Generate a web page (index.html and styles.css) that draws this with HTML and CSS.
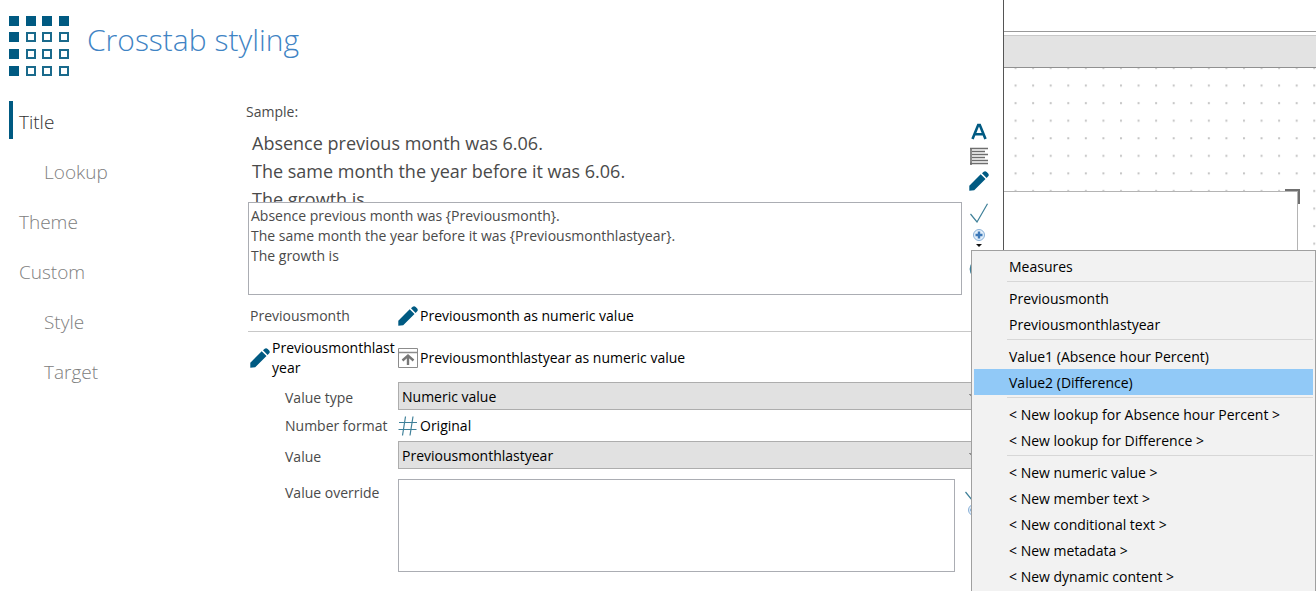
FILE: index.html
```html
<!DOCTYPE html>
<html lang="en">
<head>
  <meta charset="UTF-8" />
  <title>Crosstab styling</title>
  <meta name="viewport" content="width=device-width,initial-scale=1"/>
  <link rel="stylesheet" href="styles.css">
</head>
<body>
  <!-- shared icons -->
  <svg class="defs" width="0" height="0" aria-hidden="true">
    <symbol id="pencil" viewBox="0 0 20 20">
      <path fill="#005a82" d="M0.300 14.700 L11.700 3.300 L16.500 8.100 L5.200 19.300 L0.300 19.700 Z M13 2.300 L14.700 0.700 Q16.200 -0.300 17.700 1 L19.200 2.500 Q20.300 4 19.200 5.300 L17.600 7 Z"/>
    </symbol>
    <symbol id="check" viewBox="0 0 20 20">
      <path fill="none" stroke="#3f8099" stroke-width="1.200" d="M1.500 11 L8 19 L18.500 0.800"/>
    </symbol>
    <symbol id="add" viewBox="0 0 20 20">
      <circle cx="10" cy="7" r="5.500" fill="#e3effa" stroke="#8ab1d8"/>
      <path fill="none" stroke="#3c78b8" stroke-width="2.400" d="M10 3.500V10.500M6.500 7H13.500"/>
      <path fill="#111" d="M7 16H13L10 19Z"/>
    </symbol>
    <symbol id="chevron" viewBox="0 0 10 10">
      <path fill="none" stroke="#444" d="M0.500 3 L5 7.500 L9.500 3"/>
    </symbol>
  </svg>

  <div class="app">
    <main class="editor">
      <header class="header">
        <svg class="logo" viewBox="0 0 60 60" aria-hidden="true">
          <g fill="#005a82">
            <rect x="0" y="0" width="10" height="10"/><rect x="17" y="0" width="10" height="10"/><rect x="33" y="0" width="10" height="10"/><rect x="50" y="0" width="10" height="10"/>
            <rect x="0" y="16" width="10" height="10"/><rect x="0" y="33" width="10" height="10"/><rect x="0" y="50" width="10" height="10"/>
          </g>
          <g fill="#fff" stroke="#1a6a8c" stroke-width="2">
            <rect x="18" y="17" width="8" height="8"/><rect x="34" y="17" width="8" height="8"/><rect x="51" y="17" width="8" height="8"/>
            <rect x="18" y="34" width="8" height="8"/><rect x="34" y="34" width="8" height="8"/><rect x="51" y="34" width="8" height="8"/>
            <rect x="18" y="51" width="8" height="8"/><rect x="34" y="51" width="8" height="8"/><rect x="51" y="51" width="8" height="8"/>
          </g>
        </svg>
        <h1>Crosstab styling</h1>
      </header>

      <nav class="nav">
        <a href="#title" class="active">Title</a>
        <a href="#lookup" class="sub">Lookup</a>
        <a href="#theme">Theme</a>
        <a href="#custom">Custom</a>
        <a href="#style" class="sub">Style</a>
        <a href="#target" class="sub">Target</a>
      </nav>

      <section class="content">
        <label class="sample-label" for="template">Sample:</label>
        <div class="message">
          <div class="message-text">
            <div class="sample">
              Absence previous month was 6.06.<br>
              The same month the year before it was 6.06.<br>
              The growth is
            </div>
            <textarea id="template" class="box">Absence previous month was {Previousmonth}.
The same month the year before it was {Previousmonthlastyear}.
The growth is</textarea>
          </div>
          <div class="tools">
            <button aria-label="Font"><svg viewBox="0 0 20 20"><path fill="none" stroke="#005a82" stroke-width="2.600" d="M3.500 18 L9.200 4 H10.800 L16.500 18 M5.500 13.300 H14.500"/></svg></button>
            <button aria-label="Alignment"><svg viewBox="0 0 20 20"><path fill="none" stroke="#8a8a8a" stroke-width="2" d="M2 2V19"/><path fill="none" stroke="#6e6e6e" stroke-width="1.400" d="M1 2.500H19M3 5.500H16M3 8.500H19M3 11.500H16M3 14.500H19M1 17.500H19"/></svg></button>
            <button aria-label="Edit"><svg><use href="#pencil"/></svg></button>
            <button class="apply" aria-label="Apply"><svg><use href="#check"/></svg></button>
            <div class="add">
              <button aria-label="Insert value"><svg><use href="#add"/></svg></button>
              <div class="menu" role="menu">
                <button role="menuitem">Measures</button>
                <hr>
                <button role="menuitem">Previousmonth</button>
                <button role="menuitem">Previousmonthlastyear</button>
                <hr>
                <button role="menuitem">Value1 (Absence hour Percent)</button>
                <button role="menuitem" class="selected">Value2 (Difference)</button>
                <hr>
                <button role="menuitem">&lt; New lookup for Absence hour Percent &gt;</button>
                <button role="menuitem">&lt; New lookup for Difference &gt;</button>
                <hr>
                <button role="menuitem">&lt; New numeric value &gt;</button>
                <button role="menuitem">&lt; New member text &gt;</button>
                <button role="menuitem">&lt; New conditional text &gt;</button>
                <button role="menuitem">&lt; New metadata &gt;</button>
                <button role="menuitem">&lt; New dynamic content &gt;</button>
              </div>
            </div>
            <button aria-label="Reset"><svg viewBox="0 0 20 20"><circle cx="10" cy="11" r="8.500" fill="none" stroke="#3f8099" stroke-width="1.800"/></svg></button>
          </div>
        </div>

        <div class="row first">
          <span class="name">Previousmonth</span>
          <button class="link"><svg><use href="#pencil"/></svg>Previousmonth as numeric value</button>
        </div>
        <div class="row second">
          <button class="link"><svg><use href="#pencil"/></svg><span>Previousmonthlast<wbr>year</span></button>
          <button class="link">
            <svg viewBox="0 0 20 20"><path fill="#fff" stroke="#8c8c8c" d="M0.500 0.500H19.500V19.500H0.500Z"/><path fill="none" stroke="#8c8c8c" stroke-width="1.500" d="M0 4.500H20"/><path fill="none" stroke="#777" stroke-width="2.400" d="M10 17V8M4.500 12.500L10 7.500L15.500 12.500"/></svg>Previousmonthlastyear as numeric value
          </button>
        </div>
        <div class="row field">
          <label for="type">Value type</label>
          <div class="select">
            <select id="type"><option>Numeric value</option></select>
            <svg><use href="#chevron"/></svg>
          </div>
        </div>
        <div class="row format">
          <span class="label">Number format</span>
          <button class="link"><svg viewBox="0 0 20 20"><path fill="none" stroke="#3f8099" stroke-width="1.200" d="M7.500 0.500L4.500 19.500M15 0.500L12 19.500M1 6.500H19M0.500 13.500H18.500"/></svg>Original</button>
        </div>
        <div class="row field">
          <label for="value">Value</label>
          <div class="select">
            <select id="value"><option>Previousmonthlastyear</option></select>
            <svg><use href="#chevron"/></svg>
          </div>
        </div>
        <div class="row override">
          <label for="override">Value override</label>
          <div class="override-box">
            <textarea id="override" class="box"></textarea>
            <div class="tools">
              <button aria-label="Apply override"><svg><use href="#check"/></svg></button>
              <button aria-label="Insert override value"><svg><use href="#add"/></svg></button>
            </div>
          </div>
        </div>
      </section>
    </main>

    <aside class="canvas">
      <div class="ruler"></div>
      <div class="sheet">
        <svg class="dots" aria-hidden="true">
          <defs>
            <pattern id="grid" x="-7" y="-9" width="17.570" height="17.570" patternUnits="userSpaceOnUse">
              <rect x="0" y="8" width="2" height="2" fill="#c4c4c4"/>
            </pattern>
          </defs>
          <rect width="100%" height="100%" fill="url(#grid)"/>
        </svg>
        <div class="widget"></div>
      </div>
    </aside>
  </div>
</body>
</html>
```
FILE: styles.css
```css
* {
  box-sizing: border-box;
}
body {
  margin: 0;
  height: 100vh;
  overflow: hidden;
  background: #fff;
  color: #4a4a4a;
  font-family: 'Segoe UI', 'Open Sans', sans-serif;
  font-size: 14px;
  line-height: 20px;
}
button, select, textarea {
  font: inherit;
  color: inherit;
}
button {
  border: 0;
  padding: 0;
  background: none;
  text-align: left;
}
svg {
  display: block;
  flex: none;
}
.defs {
  position: absolute;
}
.app {
  display: grid;
  grid-template-columns: minmax(0, 1fr) 312px;
  height: 100%;
}

/* left side */
.editor {
  display: grid;
  grid-template-columns: 246px minmax(0, 1fr);
  grid-template-rows: 97px 1fr;
  border-right: 1px solid #555;
}
.header {
  grid-column: 1 / 3;
  display: flex;
  align-items: flex-start;
  gap: 18px;
  padding: 16px 9px;
}
.logo {
  width: 60px;
  height: 60px;
}
h1 {
  margin: 0;
  font-size: 30px;
  line-height: 48px;
  font-weight: 300;
  color: #3f84c4;
}
.nav {
  display: flex;
  flex-direction: column;
}
.nav a {
  height: 38px;
  margin: 4px 0 8px 9px;
  padding-left: 6px;
  border-left: 4px solid transparent;
  font-size: 19px;
  line-height: 42px;
  font-weight: 300;
  color: #808080;
  text-decoration: none;
}
.nav a.active {
  border-color: #005a82;
  color: #333;
}
.nav a.sub {
  padding-left: 31px;
}

/* message */
.content {
  padding: 5px 14px 0 0;
}
.sample-label {
  display: block;
  height: 19px;
}
.message {
  display: flex;
  gap: 7px;
  padding: 0 0 0 2px;
}
.message-text {
  flex: 1;
  margin-top: 8px;
}
.sample {
  height: 73px;
  padding-left: 4px;
  overflow: hidden;
  font-size: 18px;
  line-height: 28px;
}
.box {
  display: block;
  width: 100%;
  height: 93px;
  margin: 0;
  padding: 3px 2px;
  border: 1px solid #abadb3;
  border-radius: 0;
  background: #fff;
  resize: none;
  outline: none;
}
.tools {
  display: flex;
  flex-direction: column;
  flex: none;
  gap: 5px;
  width: 20px;
}
.tools svg, .link svg {
  width: 20px;
  height: 20px;
}
.apply {
  margin-top: 7px;
}
.add {
  position: relative;
}

/* value rows */
.row {
  display: grid;
  grid-template-columns: 148px minmax(0, 1fr);
  align-items: center;
  margin: 0 8px 0 2px;
  padding-left: 2px;
}
.first {
  height: 37px;
  padding-top: 5px;
  border-bottom: 1px solid #c8c8c8;
}
.second {
  height: 50px;
  padding-top: 1px;
}
.link {
  display: flex;
  align-items: center;
  gap: 2px;
  color: #000;
}
.row label, .row .label {
  padding-left: 35px;
  white-space: nowrap;
}
.field label {
  padding-top: 3px;
}
.select {
  position: relative;
}
.select select {
  display: block;
  width: 100%;
  height: 28px;
  padding: 1px 3px 0;
  border: 1px solid #adadad;
  border-radius: 0;
  background: #e1e1e1;
  color: #000;
  appearance: none;
}
.select svg {
  position: absolute;
  top: 9px;
  right: 2px;
  width: 10px;
  height: 10px;
}
.format {
  height: 31px;
}
.override {
  align-items: start;
  margin: 10px 5px 0 2px;
}
.override label {
  padding-top: 4px;
}
.override-box {
  display: flex;
  gap: 9px;
}
.override .tools {
  gap: 2px;
  padding-top: 2px;
}

/* popup menu */
.menu {
  position: absolute;
  top: 22px;
  left: 2px;
  width: 345px;
  padding: 2px;
  border: 1px solid #a0a0a0;
  background: #f2f2f2;
  z-index: 1;
}
.menu button {
  display: block;
  width: 100%;
  height: 26px;
  padding: 2px 0 0 35px;
  color: #000;
  white-space: nowrap;
}
.menu .selected {
  background: #91c9f7;
}
.menu hr {
  height: 1px;
  margin: 2px 0 3px 33px;
  border: 0;
  background: #d7d7d7;
}

/* report canvas */
.canvas {
  display: flex;
  flex-direction: column;
  padding-top: 31px;
}
.ruler {
  height: 37px;
  border-top: 1px solid #999;
  border-bottom: 1px solid #909090;
  background: linear-gradient(#fff 3px, #c8c8c8 3px, #c8c8c8 4px, #e3e3e3 4px);
}
.sheet {
  position: relative;
  flex: 1;
  padding: 123px 18px 0 0;
}
.dots {
  position: absolute;
  top: 0;
  left: 0;
  width: 100%;
  height: 100%;
}
.widget {
  position: relative;
  height: 200px;
  border-top: 1px solid #b4b4b4;
  border-right: 1px solid #b4b4b4;
  background: #fff;
}
.widget::after {
  content: "";
  position: absolute;
  top: -3px;
  right: -3px;
  width: 13px;
  height: 13px;
  border-top: 2px solid #707070;
  border-right: 2px solid #707070;
}
```
